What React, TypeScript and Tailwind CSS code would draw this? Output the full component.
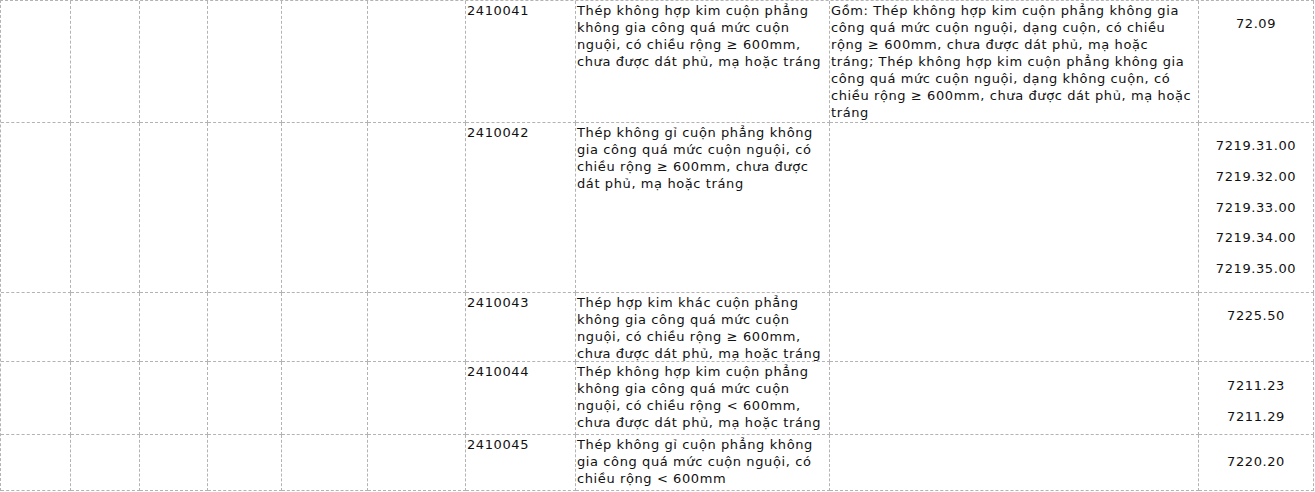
import React from "react";

type Row = {
  h: string;
  code: string;
  name: string[];
  desc: string[];
  hs: string[];
  hsPad: string;
};

const rows: Row[] = [
  {
    h: "h-[122px]",
    code: "2410041",
    name: [
      "Thép không hợp kim cuộn phẳng",
      "không gia công quá mức cuộn",
      "nguội, có chiều rộng ≥ 600mm,",
      "chưa được dát phủ, mạ hoặc tráng",
    ],
    desc: [
      "Gồm: Thép không hợp kim cuộn phẳng không gia",
      "công quá mức cuộn nguội, dạng cuộn, có chiều",
      "rộng ≥ 600mm, chưa được dát phủ, mạ hoặc",
      "tráng; Thép không hợp kim cuộn phẳng không gia",
      "công quá mức cuộn nguội, dạng không cuộn, có",
      "chiều rộng ≥ 600mm, chưa được dát phủ, mạ hoặc",
      "tráng",
    ],
    hs: ["72.09"],
    hsPad: "pt-[14px]",
  },
  {
    h: "h-[170px]",
    code: "2410042",
    name: [
      "Thép không gỉ cuộn phẳng không",
      "gia công quá mức cuộn nguội, có",
      "chiều rộng ≥ 600mm, chưa được",
      "dát phủ, mạ hoặc tráng",
    ],
    desc: [],
    hs: ["7219.31.00", "7219.32.00", "7219.33.00", "7219.34.00", "7219.35.00"],
    hsPad: "pt-[14px]",
  },
  {
    h: "h-[69px]",
    code: "2410043",
    name: [
      "Thép hợp kim khác cuộn phẳng",
      "không gia công quá mức cuộn",
      "nguội, có chiều rộng ≥ 600mm,",
      "chưa được dát phủ, mạ hoặc tráng",
    ],
    desc: [],
    hs: ["7225.50"],
    hsPad: "pt-[14px]",
  },
  {
    h: "h-[73px]",
    code: "2410044",
    name: [
      "Thép không hợp kim cuộn phẳng",
      "không gia công quá mức cuộn",
      "nguội, có chiều rộng < 600mm,",
      "chưa được dát phủ, mạ hoặc tráng",
    ],
    desc: [],
    hs: ["7211.23", "7211.29"],
    hsPad: "pt-[15px]",
  },
  {
    h: "h-[56px]",
    code: "2410045",
    name: [
      "Thép không gỉ cuộn phẳng không",
      "gia công quá mức cuộn nguội, có",
      "chiều rộng < 600mm",
    ],
    desc: [],
    hs: ["7220.20"],
    hsPad: "pt-[18px]",
  },
];

const cell = "border-r border-b border-dashed border-[#b3b3b3] overflow-hidden";

function Lines({ lines }: { lines: string[] }) {
  return (
    <>
      {lines.map((l, i) => (
        <div key={i} className="whitespace-nowrap">
          {l}
        </div>
      ))}
    </>
  );
}

export default function App() {
  return (
    <div className="bg-white w-[1315px] h-[492px] overflow-hidden text-[13px] leading-[17px] tracking-[0.6px] text-[#111] font-['DejaVu_Sans',Verdana,sans-serif]">
      <div className="w-[1314px] border-l border-t border-dashed border-[#b3b3b3] grid grid-cols-[70px_69px_68px_74px_86px_98px_110px_254px_369px_115px]">
        {rows.map((r, ri) => (
          <React.Fragment key={ri}>
            {[0, 1, 2, 3, 4, 5].map((c) => (
              <div key={c} className={`${cell} ${r.h}`} />
            ))}
            <div className={`${cell} ${r.h} pl-px pt-px`}>{r.code}</div>
            <div className={`${cell} ${r.h} pl-px pt-px`}>
              <Lines lines={r.name} />
            </div>
            <div className={`${cell} ${r.h} pl-px pt-px`}>
              <Lines lines={r.desc} />
            </div>
            <div
              className={`${cell} ${r.h} ${r.hsPad} flex flex-col items-center gap-[13.75px]`}
            >
              {r.hs.map((h, i) => (
                <div key={i}>{h}</div>
              ))}
            </div>
          </React.Fragment>
        ))}
      </div>
    </div>
  );
}
